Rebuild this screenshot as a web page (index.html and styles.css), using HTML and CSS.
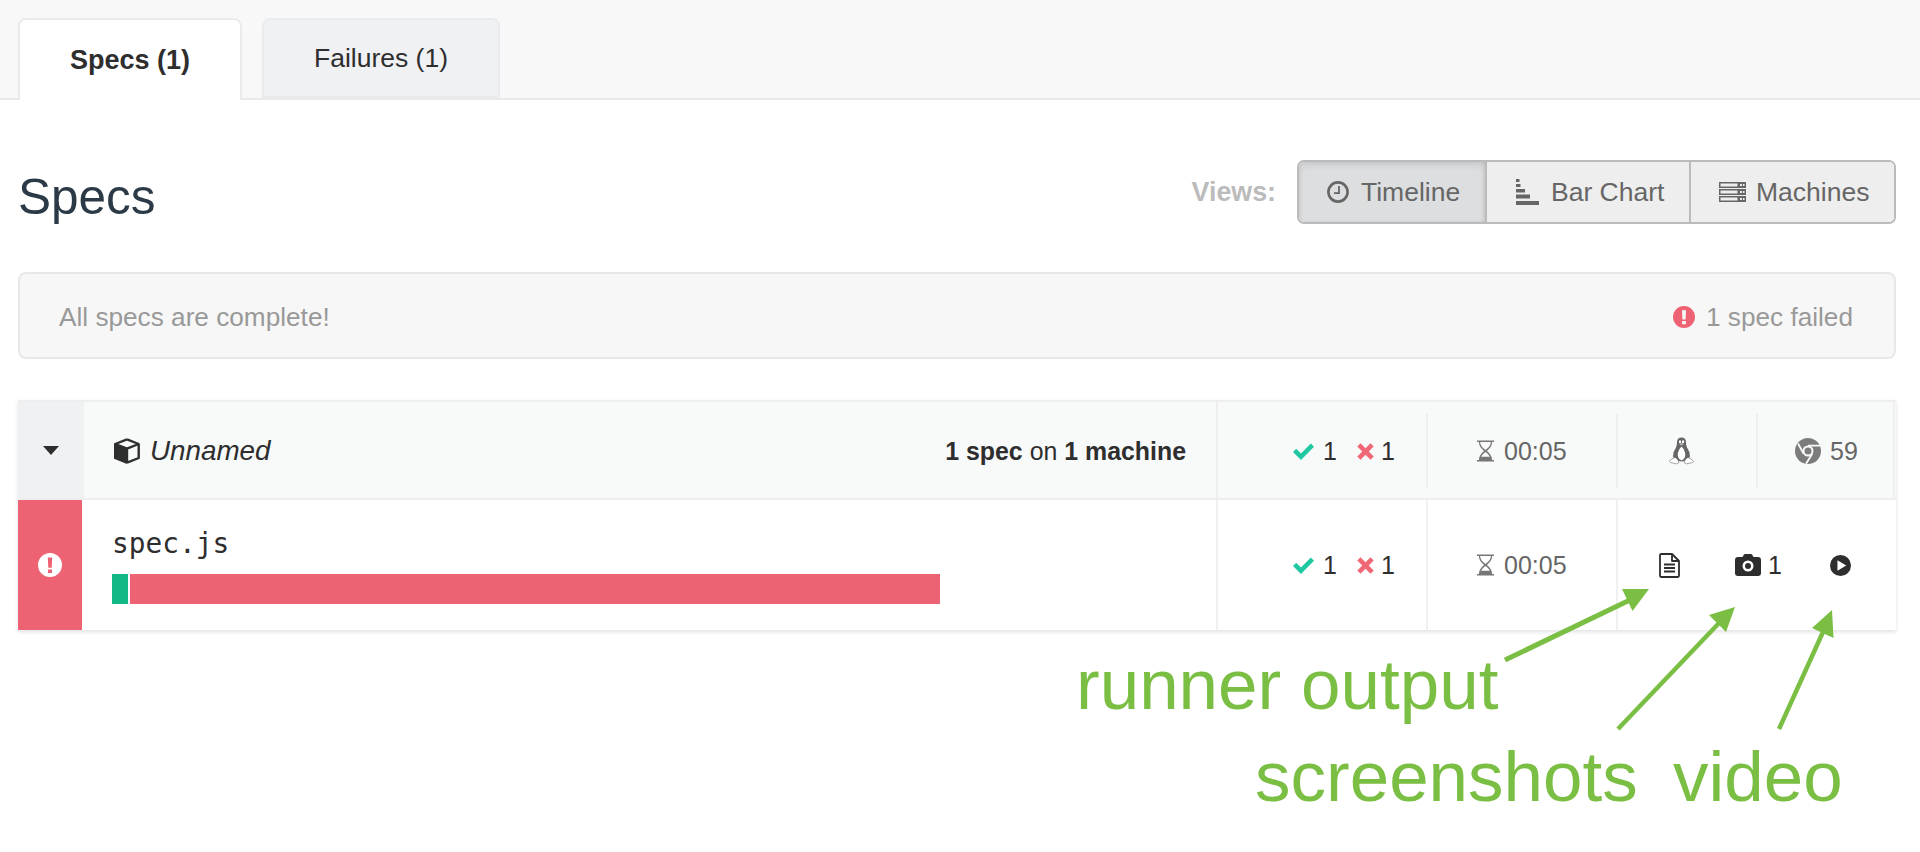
FILE: index.html
```html
<!DOCTYPE html>
<html lang="en">
<head>
<meta charset="utf-8">
<title>Specs</title>
<link rel="stylesheet" href="styles.css">
</head>
<body>
<svg class="sprite" xmlns="http://www.w3.org/2000/svg">
  <symbol id="i-alert" viewBox="0 0 24 24"><path fill="currentColor" fill-rule="evenodd" d="M12 0a12 12 0 1 0 0 24a12 12 0 1 0 0-24zM9.800 4.500h4.400l-.5 10.200h-3.400zM10 16.400h4v3.600h-4z"/></symbol>
  <symbol id="i-check" viewBox="0 0 21 17"><path fill="currentColor" d="M8 17L0 9l3.200-3.200L8 10.600 17.800 0.500 21 3.700z"/></symbol>
  <symbol id="i-x" viewBox="0 0 17 17"><path fill="currentColor" d="M3.500 0.300L8.500 5.300l5-5 3.200 3.200-5 5 5 5-3.200 3.200-5-5-5 5L0.300 13.500l5-5-5-5z"/></symbol>
  <symbol id="i-hour" viewBox="0 0 18 22"><path fill="currentColor" fill-rule="evenodd" d="M0 0h18v1.600h-2c0 4-2.500 6.900-5.500 9.400 3 2.500 5.500 5.400 5.500 9.400h2V22H0v-1.600h2c0-4 2.500-6.900 5.500-9.400C4.500 8.500 2 5.600 2 1.600H0zM3.300 1.600c0 3.500 2.600 6.400 5.700 8.400 3.100-2 5.700-4.900 5.700-8.400zM9 12C6.500 13.800 5 15.500 4.400 17H13.600C13 15.500 11.500 13.800 9 12z"/></symbol>
  <symbol id="i-clock" viewBox="0 0 22 22"><circle cx="11" cy="11" r="9.600" fill="none" stroke="currentColor" stroke-width="2.600"/><path fill="none" stroke="currentColor" stroke-width="1.800" d="M12 5v7.200H7"/></symbol>
  <symbol id="i-bars" viewBox="0 0 23 26"><path fill="currentColor" d="M0 0h3.500v3H0zM0 5h4.500v3H0zM0 10h9v3.500H0zM0 15.500h14v4H0zM0 22h23v4H0z"/></symbol>
  <symbol id="i-server" viewBox="0 0 27 20"><path fill="currentColor" fill-rule="evenodd" d="M0 0h27v6H0zM1.500 1.500v3h17v-3zM21 2v2h2V2zM24 2v2h1.500V2zM0 7h27v6H0zM1.500 8.500v3h17v-3zM21 9v2h2V9zM24 9v2h1.500V9zM0 14h27v6H0zM1.500 15.500v3h17v-3zM21 16v2h2v-2zM24 16v2h1.500v-2z"/></symbol>
  <symbol id="i-cube" viewBox="0 0 26 26"><path fill="none" stroke="currentColor" stroke-width="2.400" stroke-linejoin="round" d="M13 1.300L24.700 6V20L13 24.700M13 1.300L1.300 6L13 10.700L24.700 6M13 10.700V24.700"/><path fill="currentColor" d="M0 5.500L13 10.700V26L0 20.800z"/></symbol>
  <symbol id="i-doc" viewBox="0 0 21 25"><path fill="none" stroke="currentColor" stroke-width="1.800" stroke-linejoin="round" d="M1 2.200Q1 1 2.200 1H13L20 8V22.800Q20 24 18.800 24H2.200Q1 24 1 22.800zM13 1V8H20"/><path fill="none" stroke="currentColor" stroke-width="1.800" d="M5 11.500h11M5 15h11M5 18.500h11"/></symbol>
  <symbol id="i-cam" viewBox="0 0 26 22"><path fill="currentColor" fill-rule="evenodd" d="M3 3h4.500L9 0.500Q9.300 0 10 0h6q.7 0 1 .5L18.500 3H23q3 0 3 3v13q0 3-3 3H3q-3 0-3-3V6q0-3 3-3zM13 6.500a5.500 5.500 0 1 0 0 11a5.500 5.500 0 1 0 0-11zM13 9a3 3 0 1 1 0 6a3 3 0 1 1 0-6z"/></symbol>
  <symbol id="i-play" viewBox="0 0 22 22"><path fill="currentColor" fill-rule="evenodd" d="M11 0a11 11 0 1 0 0 22a11 11 0 1 0 0-22zM7.800 5.500L17 11l-9.200 5.500z"/></symbol>
  <symbol id="i-chrome" viewBox="0 0 26 26"><circle cx="13" cy="13" r="13" fill="currentColor"/><circle cx="13" cy="13" r="4.500" fill="currentColor" stroke="#f8f9f9" stroke-width="2"/><path fill="none" stroke="#f8f9f9" stroke-width="1.800" d="M13 7.600H25.500M8.500 15.500L3 5.500M17.300 15.800L11 25.800"/></symbol>
  <symbol id="i-tux" viewBox="0 0 25 28"><path fill="currentColor" d="M12.500 .5Q8 .5 8 5.500Q8 8.500 7 10.500Q4 14.500 4 19.500Q5 22 7 22Q9 24.500 12.500 24.500Q16 24.500 18 22Q20 22 21 19.500Q21 14.500 18 10.500Q17 8.500 17 5.500Q17 .5 12.500 .5z"/><path fill="#fff" d="M12.500 9.500Q10 11.500 8.800 16Q8.200 21.500 12.500 23.500Q16.800 21.500 16.200 16Q15 11.500 12.500 9.500z"/><path fill="#fff" d="M10 3.500h2v2.500h-2zM13 3.500h2v2.500h-2z"/><path fill="#bbb" d="M10 7l2.500-1 2.500 1-2.500 1.500z"/><path fill="#fff" stroke="currentColor" stroke-width=".6" d="M6 20.500Q1.500 22 .5 24.500Q1 26 4 26Q8 28 10 25.500Q9 21.500 6 20.500zM19 20.500Q23.500 22 24.500 24.500Q24 26 21 26Q17 28 15 25.500Q16 21.500 19 20.500z"/></symbol>
</svg>

<header class="tabbar">
  <nav class="tabs">
    <a class="tab tab-active">Specs (1)</a>
    <a class="tab tab-idle">Failures (1)</a>
  </nav>
</header>

<main class="page">
  <div class="toolbar">
    <h1 class="title">Specs</h1>
    <div class="views">
      <span class="views-label">Views:</span>
      <div class="btn-group">
        <button class="btn btn-on btn-timeline"><svg class="ic ic-clock"><use href="#i-clock"/></svg>Timeline</button>
        <button class="btn btn-bars"><svg class="ic ic-bars"><use href="#i-bars"/></svg>Bar Chart</button>
        <button class="btn btn-machines"><svg class="ic ic-server"><use href="#i-server"/></svg>Machines</button>
      </div>
    </div>
  </div>

  <div class="notice">
    <span>All specs are complete!</span>
    <span class="notice-fail"><svg class="ic ic-alert"><use href="#i-alert"/></svg>1 spec failed</span>
  </div>

  <section class="table">
    <div class="row row-group">
      <div class="caret-cell"><span class="caret"></span></div>
      <div class="name-cell">
        <svg class="ic ic-cube"><use href="#i-cube"/></svg>
        <em class="group-name">Unnamed</em>
        <span class="summary"><b>1 spec</b> on <b>1 machine</b></span>
      </div>
      <div class="cell cell-stats cell-first">
        <svg class="ic ic-check"><use href="#i-check"/></svg><span class="num">1</span>
        <svg class="ic ic-x"><use href="#i-x"/></svg><span class="num">1</span>
      </div>
      <div class="cell cell-time"><svg class="ic ic-hour"><use href="#i-hour"/></svg>00:05</div>
      <div class="cell cell-os"><svg class="ic ic-tux"><use href="#i-tux"/></svg></div>
      <div class="cell cell-browser"><svg class="ic ic-chrome"><use href="#i-chrome"/></svg>59</div>
    </div>
    <div class="row row-spec">
      <div class="status-cell"><svg class="ic ic-status"><use href="#i-alert"/></svg></div>
      <div class="spec-cell">
        <div class="spec-name">spec.js</div>
        <div class="bar"><span class="bar-pass"></span><span class="bar-fail"></span></div>
      </div>
      <div class="cell cell-stats cell-first">
        <svg class="ic ic-check"><use href="#i-check"/></svg><span class="num">1</span>
        <svg class="ic ic-x"><use href="#i-x"/></svg><span class="num">1</span>
      </div>
      <div class="cell cell-time"><svg class="ic ic-hour"><use href="#i-hour"/></svg>00:05</div>
      <div class="cell cell-actions">
        <svg class="ic ic-doc"><use href="#i-doc"/></svg>
        <svg class="ic ic-cam"><use href="#i-cam"/></svg><span class="num num-cam">1</span>
        <svg class="ic ic-play"><use href="#i-play"/></svg>
      </div>
    </div>
  </section>
</main>

<svg class="arrows" viewBox="0 0 1920 852" xmlns="http://www.w3.org/2000/svg">
  <path class="arrow-line a1" d="M1505 660L1632 599"/>
  <path class="arrow-head" d="M1649 589L1622 589L1632.500 611z"/>
  <path class="arrow-line" d="M1618 729L1720 622"/>
  <path class="arrow-head" d="M1735 607L1709 615L1726 632z"/>
  <path class="arrow-line" d="M1779 729L1823 632"/>
  <path class="arrow-head" d="M1832 610L1812 628L1833.500 638z"/>
</svg>
<span class="note note-runner">runner output</span>
<span class="note note-shots">screenshots</span>
<span class="note note-video">video</span>
</body>
</html>
```

FILE: styles.css
```css
* { box-sizing: border-box; }
html, body { margin: 0; height: 100%; }
body {
  position: relative;
  height: 852px;
  overflow: hidden;
  background: #fff;
  color: #2e2e2e;
  font-family: "Liberation Sans", Arial, sans-serif;
  font-size: 24px;
}
.sprite { display: none; }
.ic { display: block; flex: none; }

/* tabs */
.tabbar {
  height: 100px;
  padding: 18px 0 0 18px;
  background: #f8f8f8;
  border-bottom: 2px solid #e9e9e9;
}
.tabs { display: flex; gap: 20px; height: 82px; }
.tab {
  display: flex;
  align-items: center;
  justify-content: center;
  border: 2px solid #e9ebee;
  border-radius: 8px 8px 0 0;
  font-size: 26.500px;
  color: #2e2e2e;
}
.tab-active {
  width: 224px;
  height: 82px;
  border-bottom: 0;
  background: #fff;
  font-size: 27px;
  font-weight: 700;
}
.tab-idle {
  width: 238px;
  height: 80px;
  padding-top: 1px;
  background: #f0f1f3;
}

/* page */
.page { padding: 60px 24px 0 18px; }
.toolbar {
  display: flex;
  align-items: center;
  justify-content: space-between;
  height: 64px;
}
.title {
  margin: 0;
  padding-top: 9px;
  font-size: 49.500px;
  font-weight: 400;
  color: #2b3a46;
}
.views { display: flex; align-items: center; gap: 21px; }
.views-label { font-size: 26.800px; font-weight: 700; color: #bbb; }
.btn-group {
  display: flex;
  height: 64px;
  border: 2px solid #bbb;
  border-radius: 7px;
  overflow: hidden;
}
.btn {
  display: flex;
  align-items: center;
  padding: 0;
  border: 0;
  background: #eee;
  color: #666;
  font: 26.500px "Liberation Sans", Arial, sans-serif;
}
.btn + .btn { border-left: 2px solid #bbb; }
.btn-timeline { width: 186px; padding-left: 28px; gap: 12px; }
.btn-bars { width: 204px; padding-left: 29px; gap: 12px; }
.btn-machines { width: 205px; padding-left: 28px; gap: 10px; }
.btn-on {
  background: #dddee0;
  box-shadow: inset 0 4px 6px rgba(0, 0, 0, .08), inset -2px 0 3px rgba(0, 0, 0, .06), inset 2px 0 3px rgba(0, 0, 0, .04);
}
.ic-clock { width: 22px; height: 22px; }
.ic-bars { width: 23px; height: 26px; }
.ic-server { width: 27px; height: 20px; }

/* notice */
.notice {
  display: flex;
  align-items: center;
  justify-content: space-between;
  height: 87px;
  margin-top: 48px;
  padding: 3px 41px 0 39px;
  background: #f7f7f7;
  border: 2px solid #e8e8e8;
  border-radius: 8px;
  color: #999;
  font-size: 26.200px;
}
.notice-fail { display: flex; align-items: center; gap: 11px; }
.ic-alert { width: 22px; height: 22px; color: #ee6373; }

/* table */
.table {
  margin-top: 41px;
  border-top: 2px solid #eee;
  box-shadow: 0 2px 4px rgba(0, 0, 0, .12);
}
.row { display: flex; }
.row-group { height: 98px; background: #f8f9f9; border-bottom: 2px solid #eee; }
.row-spec { height: 130px; }
.caret-cell {
  display: flex;
  align-items: center;
  justify-content: center;
  width: 66px;
  background: #f0f1f3;
}
.caret {
  width: 0;
  height: 0;
  border-left: 8px solid transparent;
  border-right: 8px solid transparent;
  border-top: 9px solid #2e2e2e;
}
.name-cell {
  display: flex;
  align-items: center;
  width: 1132px;
  padding: 2px 30px 0 30px;
  font-size: 27.800px;
}
.ic-cube { width: 26px; height: 26px; }
.group-name { margin-left: 10px; }
.summary { margin-left: auto; font-size: 24.900px; }
.status-cell {
  display: flex;
  align-items: center;
  justify-content: center;
  width: 64px;
  background: #ee6373;
}
.ic-status { width: 24px; height: 24px; color: #fff; }
.spec-cell { width: 1134px; padding: 27px 0 0 30px; }
.spec-name {
  height: 38px;
  font-family: "DejaVu Sans Mono", "Liberation Mono", monospace;
  font-size: 27.800px;
  line-height: 34px;
}
.bar { display: flex; gap: 2px; width: 828px; height: 30px; margin-top: 9px; }
.bar-pass { width: 16px; background: #12b886; }
.bar-fail { flex: 1; background: #ee6373; }

.cell {
  display: flex;
  align-items: center;
  position: relative;
  color: #666;
  font-size: 25px;
}
.row-group .cell { padding-top: 2px; }
.cell::before {
  content: "";
  position: absolute;
  left: 0;
  top: 0;
  bottom: 0;
  width: 2px;
  background: #f0f0f0;
}
.row-group .cell::before { top: 12px; bottom: 10px; background: #eee; }
.row-group .cell-first::before { top: 0; bottom: 0; }
.cell-stats { width: 210px; padding-left: 77px; color: #2e2e2e; }
.cell-time { width: 190px; padding-left: 51px; gap: 10px; }
.cell-os { width: 140px; padding-left: 53px; }
.cell-browser { width: 139px; padding-left: 39px; gap: 9px; }
.row-group .cell-browser { border-right: 2px solid #eee; }
.cell-actions { width: 280px; padding-left: 43px; color: #2e2e2e; }
.ic-check { width: 21px; height: 17px; color: #1fc8a0; }
.ic-x { width: 17px; height: 17px; margin-left: 20px; color: #f06775; }
.num { margin-left: 9px; }
.ic-x + .num { margin-left: 7px; }
.ic-hour { width: 17px; height: 22px; color: #777; }
.ic-tux { width: 25px; height: 28px; color: #666; }
.ic-chrome { width: 26px; height: 26px; color: #7c7c7c; }
.ic-doc { width: 21px; height: 25px; }
.ic-cam { width: 26px; height: 22px; margin-left: 55px; }
.num-cam { margin-left: 7px; }
.ic-play { width: 21px; height: 21px; margin-left: 48px; }

/* annotations on top of the page */
.arrows {
  position: absolute;
  left: 0;
  top: 0;
  width: 1920px;
  height: 852px;
  pointer-events: none;
}
.arrow-line { fill: none; stroke: #7abf43; stroke-width: 4.500; }
.arrow-line.a1 { stroke-width: 5; }
.arrow-head { fill: #7abf43; }
.note {
  position: absolute;
  color: #7abf43;
  font-size: 71px;
  line-height: 80px;
  white-space: nowrap;
}
.note-runner { left: 1076px; top: 645px; }
.note-shots { left: 1255px; top: 737px; }
.note-video { left: 1673px; top: 737px; }
```
